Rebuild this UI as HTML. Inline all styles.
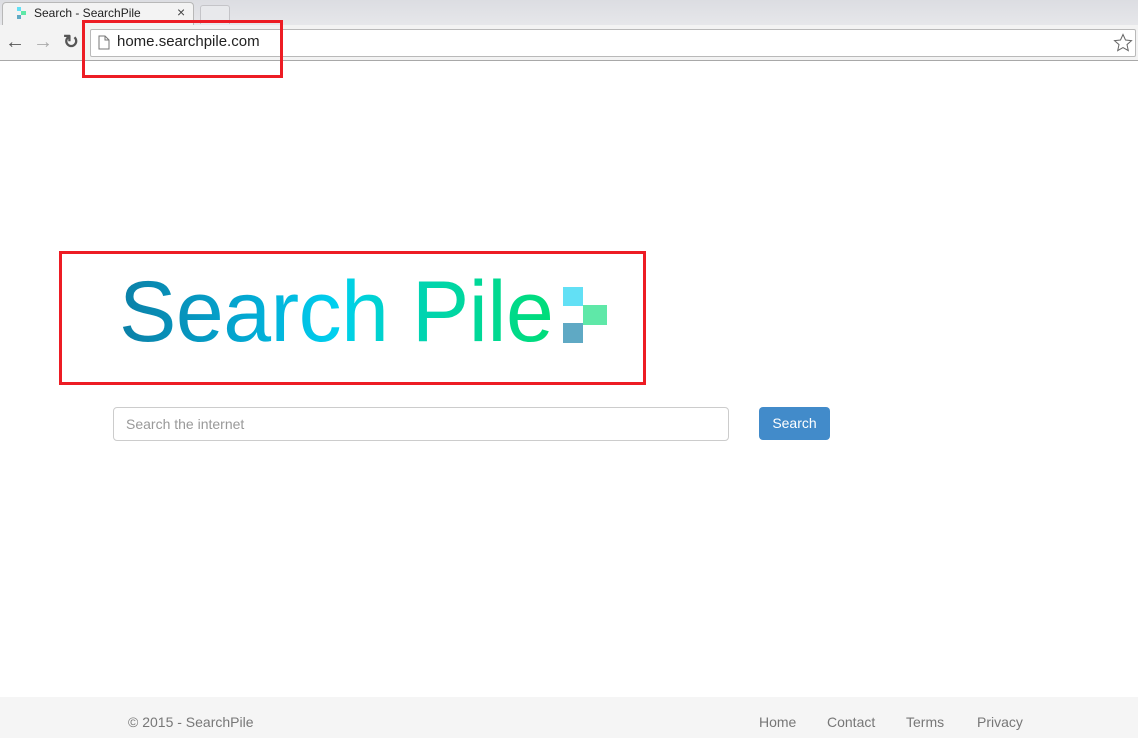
<!DOCTYPE html><html><head><style>
body{margin:0;width:1138px;height:738px;position:relative;overflow:hidden;background:#fff;font-family:"Liberation Sans",Arial,sans-serif}
.abs{position:absolute}
</style></head><body>
<div class="abs" style="left:0;top:0;width:1138px;height:25px;background:linear-gradient(#dcdde2,#e6e7ea)"></div>
<div class="abs" style="left:2px;top:2px;width:190px;height:23px;background:#f3f3f3;border:1px solid #b8b8b8;border-bottom:none;border-radius:4px 4px 0 0"></div>
<div class="abs" style="left:200px;top:5px;width:28px;height:18px;background:#e8e9ec;border:1px solid #c4c4c8;border-bottom:none;border-radius:3px 3px 0 0"></div>
<div class="abs" style="left:17px;top:7px;width:4px;height:4px;background:#62e0f5"></div>
<div class="abs" style="left:21px;top:11px;width:5px;height:4px;background:#5fe8a8"></div>
<div class="abs" style="left:17px;top:15px;width:4px;height:4px;background:#5fa9c4"></div>
<div class="abs" style="left:34px;top:6px;font-size:12px;color:#222">Search - SearchPile</div>
<div class="abs" style="left:177px;top:4px;font-size:14px;color:#444">×</div>
<div class="abs" style="left:0;top:25px;width:1138px;height:35px;background:#f3f3f3;border-bottom:1px solid #a8a8a8"></div>
<div class="abs" style="left:5px;top:31px;font-size:20px;color:#555;font-weight:bold">←</div>
<div class="abs" style="left:33px;top:31px;font-size:20px;color:#aaa;font-weight:bold">→</div>
<div class="abs" style="left:63px;top:31px;font-size:19px;color:#555;font-weight:bold">↻</div>
<div class="abs" style="left:90px;top:29px;width:1044px;height:26px;background:#fff;border:1px solid #b9b9b9;border-radius:2px"></div>
<svg class="abs" style="left:98px;top:35px" width="12" height="15"><path d="M1 1h6l4 4v9H1z M7 1v4h4" fill="#fff" stroke="#777"/></svg>
<div class="abs" style="left:117px;top:33px;font-size:15px;color:#222">home.searchpile.com</div>
<svg class="abs" style="left:1113px;top:33px" width="20" height="20"><path d="M10 1.5l2.5 5.5 6 .6-4.5 4 1.3 6L10 14.6 4.7 17.6 6 11.6 1.5 7.6l6-.6z" fill="none" stroke="#666"/></svg>
<div class="abs" style="left:82px;top:20px;width:195px;height:52px;border:3px solid #ed1c24"></div>
<div class="abs" style="left:59px;top:251px;width:581px;height:128px;border:3px solid #ed1c24"></div>
<div class="abs" style="left:119px;top:262px;font-size:86px;letter-spacing:-0.5px;line-height:100px;background:linear-gradient(90deg,#0b7fa6 0%,#03a9d3 30%,#00d0ef 50%,#00d4b0 70%,#00dd78 100%);-webkit-background-clip:text;background-clip:text;color:transparent">Search Pile</div>
<div class="abs" style="left:563px;top:287px;width:20px;height:19px;background:#62e0f5"></div>
<div class="abs" style="left:583px;top:305px;width:24px;height:20px;background:#5fe8a8"></div>
<div class="abs" style="left:563px;top:323px;width:20px;height:20px;background:#5fa9c4"></div>
<div class="abs" style="left:113px;top:407px;width:614px;height:32px;border:1px solid #ccc;border-radius:4px"></div>
<div class="abs" style="left:126px;top:416px;font-size:14px;color:#999">Search the internet</div>
<div class="abs" style="left:759px;top:407px;width:71px;height:33px;background:#428bca;border-radius:4px;color:#fff;font-size:14px;text-align:center;line-height:33px">Search</div>
<div class="abs" style="left:0;top:697px;width:1138px;height:41px;background:#f5f5f5"></div>
<div class="abs" style="left:128px;top:714px;font-size:14px;color:#777">© 2015 - SearchPile</div>
<div class="abs" style="left:759px;top:714px;font-size:14px;color:#777">Home</div>
<div class="abs" style="left:827px;top:714px;font-size:14px;color:#777">Contact</div>
<div class="abs" style="left:906px;top:714px;font-size:14px;color:#777">Terms</div>
<div class="abs" style="left:977px;top:714px;font-size:14px;color:#777">Privacy</div>
</body></html>
